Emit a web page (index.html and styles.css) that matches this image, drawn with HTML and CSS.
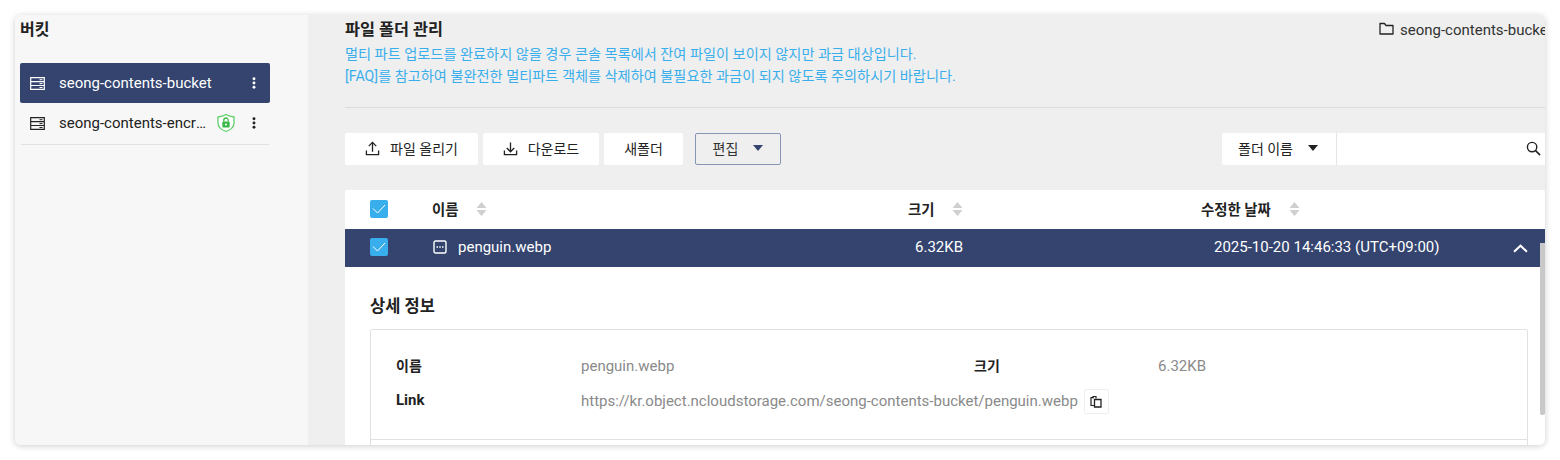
FILE: index.html
```html
<!DOCTYPE html>
<html lang="ko">

<head>
    <meta charset="UTF-8">
    <title>파일 폴더 관리</title>
    <link rel="stylesheet" href="styles.css">
</head>

<body>
    <svg class="defs">
        <symbol id="server" viewBox="0 0 15 13">
            <path d="M.7.7h13.600v11.600H.7z M.7 4.600h13.600 M.7 8.500h13.600" fill="none" stroke="currentColor" stroke-width="1.200" />
            <path d="M9.500 2.700h3 M9.500 6.600h3 M9.500 10.500h3" stroke="currentColor" stroke-width="1" />
        </symbol>
        <symbol id="dots" viewBox="0 0 4 14">
            <circle cx="2" cy="2" r="1.700" fill="currentColor" />
            <circle cx="2" cy="7" r="1.700" fill="currentColor" />
            <circle cx="2" cy="12" r="1.700" fill="currentColor" />
        </symbol>
        <symbol id="check" viewBox="0 0 18 18">
            <rect width="18" height="18" rx="2" fill="#39aeec" />
            <path d="M3 8.500l4.500 4.500 7.500-8" fill="none" stroke="#fff" stroke-width="1" />
        </symbol>
        <symbol id="sort" viewBox="0 0 10 14">
            <path d="M5 0l5 6H0z M0 8h10l-5 6z" fill="#cfcfcf" />
        </symbol>
    </svg>

    <div class="window">
        <aside class="sidebar">
            <h2 class="sidebar-title">버킷</h2>
            <ul class="bucket-list">
                <li class="bucket bucket-active">
                    <svg class="bucket-icon"><use href="#server" /></svg>
                    <span class="bucket-name">seong-contents-bucket</span>
                    <svg class="bucket-menu"><use href="#dots" /></svg>
                </li>
                <li class="bucket">
                    <svg class="bucket-icon"><use href="#server" /></svg>
                    <span class="bucket-name">seong-contents-encrypted</span>
                    <svg class="shield" viewBox="0 0 20 20">
                        <path d="M10 1.500c2.500 1.500 5 2.200 8 2.500v6c0 4-3.200 6.800-8 8.500-4.800-1.700-8-4.500-8-8.500V4c3-.3 5.500-1 8-2.500z" fill="#fff" stroke="#62cf6c" stroke-width="1.300" />
                        <rect x="6.300" y="8.500" width="7.400" height="6" rx="1" fill="#3db84a" />
                        <path d="M7.800 8.500V7.200a2.200 2.200 0 0 1 4.400 0v1.300" fill="none" stroke="#3db84a" stroke-width="1.300" />
                        <circle cx="10" cy="11.500" r="1" fill="#fff" />
                    </svg>
                    <svg class="bucket-menu"><use href="#dots" /></svg>
                </li>
            </ul>
        </aside>

        <main class="main">
            <header class="page-head">
                <div class="page-title-row">
                    <h1 class="page-title">파일 폴더 관리</h1>
                    <div class="crumb">
                        <svg class="crumb-icon" viewBox="0 0 15 13">
                            <path d="M1 1.500h4.500l1.500 2h7v8.500H1z" fill="none" stroke="#222" stroke-width="1.300" stroke-linejoin="round" />
                        </svg>
                        <span>seong-contents-bucket</span>
                    </div>
                </div>
                <p class="notice">멀티 파트 업로드를 완료하지 않을 경우 콘솔 목록에서 잔여 파일이 보이지 않지만 과금 대상입니다.</p>
                <p class="notice">[FAQ]를 참고하여 불완전한 멀티파트 객체를 삭제하여 불필요한 과금이 되지 않도록 주의하시기 바랍니다.</p>
            </header>

            <div class="toolbar">
                <button class="btn btn-upload">
                    <svg class="btn-icon" viewBox="0 0 16 16">
                        <path d="M1.500 10v4.500h13V10 M8 11.500V2 M4 5.500L8 1.500l4 4" fill="none" stroke="#222" stroke-width="1.400" />
                    </svg>
                    파일 올리기
                </button>
                <button class="btn btn-download">
                    <svg class="btn-icon" viewBox="0 0 16 16">
                        <path d="M1.500 10v4.500h13V10 M8 1.500V11 M4 7.500l4 4 4-4" fill="none" stroke="#222" stroke-width="1.400" />
                    </svg>
                    다운로드
                </button>
                <button class="btn btn-folder">새폴더</button>
                <button class="btn btn-edit">편집<span class="caret caret-edit"></span></button>
                <div class="search">
                    <div class="search-select">폴더 이름<span class="caret"></span></div>
                    <div class="search-input">
                        <svg class="search-icon" viewBox="0 0 16 16">
                            <circle cx="6.500" cy="6.500" r="5" fill="none" stroke="#222" stroke-width="1.500" />
                            <path d="M10.200 10.200L15 15" stroke="#222" stroke-width="1.700" />
                        </svg>
                    </div>
                </div>
            </div>

            <section class="table">
                <div class="row row-head">
                    <svg class="checkbox"><use href="#check" /></svg>
                    <div class="cell">이름<svg class="sort"><use href="#sort" /></svg></div>
                    <div class="cell">크기<svg class="sort"><use href="#sort" /></svg></div>
                    <div class="cell">수정한 날짜<svg class="sort"><use href="#sort" /></svg></div>
                </div>
                <div class="row row-selected">
                    <svg class="checkbox"><use href="#check" /></svg>
                    <div class="cell">
                        <svg class="file-icon" viewBox="0 0 14 14">
                            <rect x="1" y="1" width="12" height="12" rx="1.500" fill="none" stroke="#fff" stroke-width="1.400" />
                            <path d="M3.500 7h1.500 M6.250 7h1.500 M9 7h1.500" stroke="#fff" stroke-width="1.500" />
                        </svg>
                        penguin.webp
                    </div>
                    <div class="cell cell-size">6.32KB</div>
                    <div class="cell cell-date">2025-10-20 14:46:33 (UTC+09:00)</div>
                    <svg class="chevron" viewBox="0 0 14 8">
                        <path d="M1 7l6-5.500L13 7" fill="none" stroke="#fff" stroke-width="2" />
                    </svg>
                </div>

                <div class="detail">
                    <h3 class="detail-title">상세 정보</h3>
                    <div class="detail-box">
                        <div class="detail-grid">
                            <div class="detail-label">이름</div>
                            <div class="detail-value">penguin.webp</div>
                            <div class="detail-label">크기</div>
                            <div class="detail-value">6.32KB</div>
                            <div class="detail-label detail-label-latin">Link</div>
                            <div class="detail-value detail-link">
                                https://kr.object.ncloudstorage.com/seong-contents-bucket/penguin.webp
                                <button class="copy-btn">
                                    <svg viewBox="0 0 12 13" class="copy-icon">
                                        <path d="M3.500 2.500H1v8h3" fill="none" stroke="#222" stroke-width="1.200" />
                                        <path d="M4.500 4.500h6.500V12H4.500z" fill="#fff" stroke="#222" stroke-width="1.300" />
                                        <path d="M3 3.500V1.500h3v2" fill="none" stroke="#222" stroke-width="1.200" />
                                    </svg>
                                </button>
                            </div>
                        </div>
                        <div class="detail-next"></div>
                    </div>
                </div>
                <div class="scrollbar"></div>
            </section>
        </main>
    </div>
</body>

</html>
```

FILE: styles.css
```css
* {
    margin: 0;
    padding: 0;
    box-sizing: border-box;
}

body {
    font-family: Roboto, "Noto Sans CJK KR", sans-serif;
    background-color: #fff;
    padding: 15px;
    height: 460px;
    overflow: hidden;
    color: #222;
}

.defs {
    display: none;
}

.window {
    display: flex;
    width: 1530px;
    height: 430px;
    border-radius: 6px;
    overflow: hidden;
    box-shadow: 0 1px 6px rgba(0, 0, 0, 0.2);
}

/* Sidebar */
.sidebar {
    width: 293px;
    flex: none;
    background-color: #f7f7f7;
    padding: 0 5px;
}

.sidebar-title {
    font-size: 16px;
    font-weight: 700;
    line-height: 24px;
    margin-top: 3px;
    margin-bottom: 21px;
}

.bucket-list {
    list-style: none;
    width: 250px;
}

.bucket {
    display: flex;
    align-items: center;
    height: 42px;
    padding: 0 13px 1px 9px;
    font-size: 15px;
    border-bottom: 1px solid #e2e2e2;
    margin-left: 1px;
    width: 248px;
}

.bucket-active {
    height: 40px;
    margin-left: 0;
    width: 250px;
    background-color: #34446f;
    color: #fff;
    border-bottom: none;
    border-radius: 2px;
    padding: 0 14px 0 10px;
}

.bucket-icon {
    width: 15px;
    height: 13px;
    flex: none;
    margin-right: 14px;
}

.bucket-name {
    flex: 1;
    min-width: 0;
    white-space: nowrap;
    overflow: hidden;
    text-overflow: ellipsis;
}

.shield {
    width: 20px;
    height: 20px;
    flex: none;
    margin-left: 7px;
    margin-right: 16px;
}

.bucket-menu {
    width: 4px;
    height: 12px;
    flex: none;
    margin-left: 8px;
}

.bucket .shield + .bucket-menu {
    margin-left: 0;
}

/* Main */
.main {
    position: relative;
    flex: 1;
    min-width: 0;
    background-color: #efefef;
    padding-left: 37px;
    overflow: hidden;
}

.page-head {
    height: 93px;
    border-bottom: 1px solid #dcdcdc;
    padding-top: 3px;
}

.page-title-row {
    display: flex;
    justify-content: space-between;
    align-items: center;
    height: 24px;
    margin-bottom: 1px;
}

.page-title {
    font-size: 16.300px;
    font-weight: 700;
    line-height: 24px;
}

.crumb {
    display: flex;
    align-items: center;
    width: 166px;
    flex: none;
    font-size: 15px;
    white-space: nowrap;
    overflow: hidden;
    color: #333;
}

.crumb-icon {
    width: 15px;
    height: 13px;
    margin-right: 6px;
    margin-top: -3px;
    flex: none;
}

.notice {
    font-size: 14.200px;
    line-height: 22px;
    color: #39aeec;
}

.toolbar {
    display: flex;
    align-items: stretch;
    height: 32px;
    margin-top: 25px;
}

.btn {
    display: flex;
    align-items: center;
    justify-content: center;
    font-family: inherit;
    font-size: 14px;
    color: #222;
    background-color: #fff;
    border: none;
    border-radius: 2px;
    margin-right: 5px;
    padding-bottom: 2px;
}

.btn-upload {
    width: 133px;
}

.btn-download {
    width: 116px;
}

.btn-folder {
    width: 79px;
    margin-right: 12px;
}

.btn-edit {
    width: 86px;
    margin-right: 0;
    background-color: #efefef;
    border: 1px solid #8496b4;
    color: #333;
}

.btn-icon {
    width: 15px;
    height: 15px;
    margin-right: 10px;
}

.caret {
    display: inline-block;
    width: 0;
    height: 0;
    border-left: 5px solid transparent;
    border-right: 5px solid transparent;
    border-top: 6px solid #222;
    margin-left: 15px;
}

.caret-edit {
    border-top-color: #34446f;
    margin-left: 15px;
}

.search {
    display: flex;
    margin-left: auto;
}

.search-select {
    display: flex;
    align-items: center;
    width: 115px;
    padding-left: 16px;
    padding-bottom: 2px;
    font-size: 14px;
    background-color: #fff;
    border-right: 1px solid #e5e5e5;
    border-radius: 2px 0 0 2px;
}

.search-input {
    display: flex;
    align-items: center;
    justify-content: flex-end;
    width: 208px;
    padding-right: 4px;
    padding-bottom: 2px;
    background-color: #fff;
}

.search-icon {
    width: 15px;
    height: 15px;
}

/* Table */
.table {
    position: relative;
    height: 300px;
    margin-top: 25px;
    background-color: #fff;
    border-radius: 2px 2px 0 0;
}

.row {
    display: grid;
    grid-template-columns: 87px 476px 293px 1fr;
    align-items: center;
    position: relative;
    font-size: 14.400px;
    padding-bottom: 2px;
}

.row .checkbox {
    width: 18px;
    height: 18px;
    margin-left: 25px;
}

.cell {
    display: flex;
    align-items: center;
}

.row-head {
    height: 39px;
    font-weight: 700;
}

.sort {
    width: 11px;
    height: 14px;
    margin-left: 18px;
}

.row-selected {
    height: 38px;
    background-color: #34446f;
    color: #fff;
    font-size: 15px;
    font-weight: 400;
}

.file-icon {
    width: 14px;
    height: 14px;
    margin-left: 1px;
    margin-right: 11px;
}

.cell-size {
    padding-left: 7px;
}

.cell-date {
    padding-left: 13px;
}

.chevron {
    position: absolute;
    right: 17px;
    top: 15px;
    width: 15px;
    height: 9px;
}

.detail {
    padding: 28px 17px 0 25px;
}

.detail-title {
    font-size: 16.500px;
    font-weight: 700;
    line-height: 24px;
    margin-bottom: 10px;
}

.detail-box {
    border: 1px solid #e2e2e2;
    border-radius: 2px;
    height: 130px;
}

.detail-grid {
    display: grid;
    grid-template-columns: 185px 393px 184px 1fr;
    grid-template-rows: 35px 36px;
    align-items: center;
    padding: 18px 0 0 25px;
    height: 110px;
    border-bottom: 1px solid #e2e2e2;
    font-size: 15px;
}

.detail-label {
    font-size: 14px;
    font-weight: 700;
    color: #222;
    padding-bottom: 2px;
}

.detail-label-latin {
    font-size: 15px;
}

.detail-value {
    color: #8a8a8a;
}

.detail-link {
    display: flex;
    align-items: center;
    white-space: nowrap;
    grid-column: 2 / 5;
}

.copy-btn {
    display: flex;
    align-items: center;
    justify-content: center;
    width: 25px;
    height: 25px;
    margin-left: 6px;
    background-color: #fff;
    border: 1px solid #eee;
    border-radius: 2px;
}

.copy-icon {
    width: 12px;
    height: 13px;
}

.scrollbar {
    position: absolute;
    top: 53px;
    right: 0;
    width: 5px;
    height: 172px;
    background-color: #c8c8c8;
    border-radius: 0 0 2px 2px;
}
```
